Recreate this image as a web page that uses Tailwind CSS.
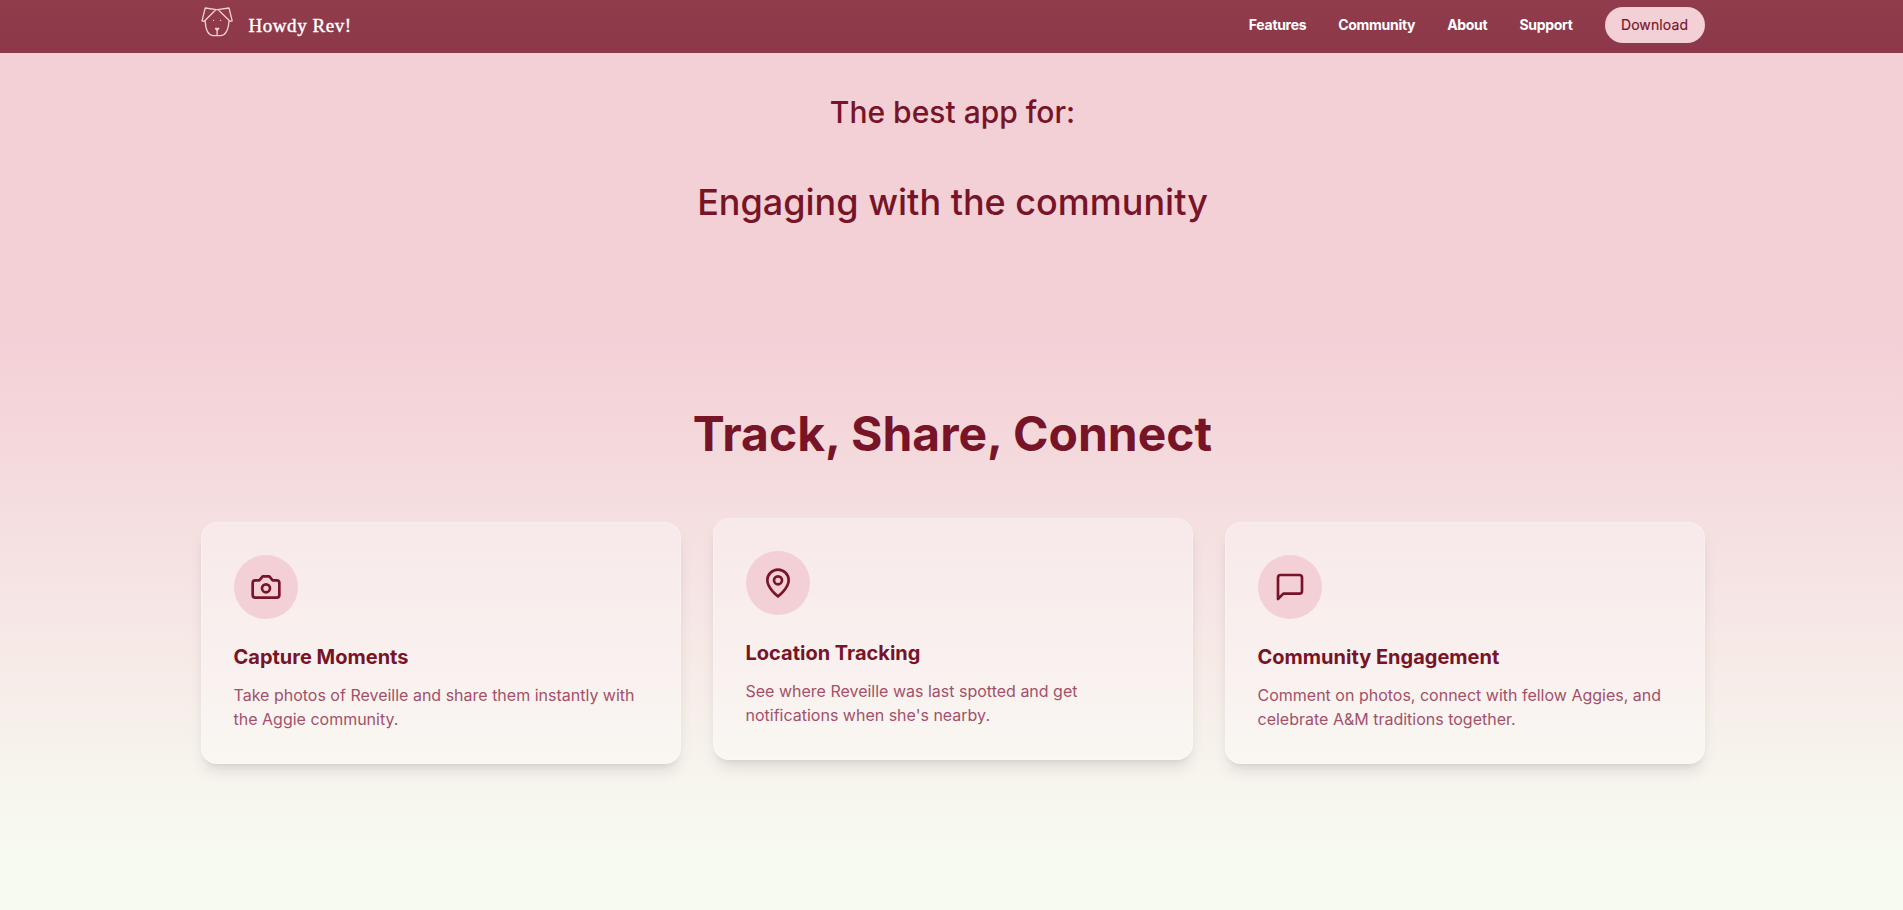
<!DOCTYPE html>
<html lang="en">
<head>
  <meta charset="UTF-8" />
  <meta name="viewport" content="width=device-width, initial-scale=1.0"/>
  <title>Howdy Rev!</title>
  <script src="https://cdn.jsdelivr.net/npm/@tailwindcss/browser@4"></script>
</head>
<body class="bg-[#f7faf1] text-[#771428] font-['Inter',sans-serif] overflow-hidden">
  <div class="w-[1905px] h-[910px] overflow-hidden">
    <header class="h-[53px] bg-linear-to-b from-[#913c4b] to-[#8c384a]">
      <div class="max-w-[1536px] mx-auto px-4 pt-[7px] flex items-center justify-between">
        <a href="#" class="flex items-center gap-4">
          <svg class="w-8 h-8 -mt-2" viewBox="0 0 32 32" fill="none" stroke="#f3cfd6" stroke-width="1.3" stroke-linejoin="round" stroke-linecap="round">
            <path d="M15.500 4.600 4.200 3 1 15.800 3.200 16.300 14.800 4.700" />
            <path d="M16.500 4.600 28 3 31.200 15.800 29 16.300 17.200 4.700" />
            <path d="M4.200 16.300C4.500 23 6.500 30 12 30.600H20C25.500 30 27.500 23 28 16.300" />
            <path fill="#f3cfd6" d="M14.500 23.500H17.800L16.100 25.300Z" />
            <path d="M16.100 25.600V30" />
            <path d="M12.500 15.300V15.400M19.500 15.300V15.400" />
          </svg>
          <span class="pt-0.5 text-[19px] leading-7 tracking-[0.55px] text-white font-['Liberation_Serif',serif] [-webkit-text-stroke:0.4px_white]">Howdy Rev!</span>
        </a>
        <nav class="flex items-center gap-8 text-sm text-white">
          <a href="#" class="font-bold tracking-[-0.3px]">Features</a>
          <a href="#" class="font-bold tracking-[-0.3px]">Community</a>
          <a href="#" class="font-bold tracking-[-0.3px]">About</a>
          <a href="#" class="font-bold tracking-[-0.3px]">Support</a>
          <a href="#" class="h-9 w-[100px] flex items-center justify-center rounded-full bg-[#f3cfd6] text-[#771428] tracking-[0.1px] [-webkit-text-stroke:0.15px_#771428]">Download</a>
        </nav>
      </div>
    </header>

    <section class="h-[277px] bg-[#f3cfd6] pt-[41px] text-center">
      <h2 class="text-3xl font-medium">The best app for:</h2>
      <p class="mt-[52px] text-4xl font-medium">Engaging with the community</p>
    </section>

    <section class="bg-linear-to-b from-[#f3cfd6] to-[#f7faf1] py-20">
      <div class="max-w-[1536px] mx-auto px-4">
        <h2 class="text-5xl leading-none font-bold text-center mb-16">Track, Share, Connect</h2>
        <div class="grid grid-cols-3 gap-8">
          <div class="rounded-2xl border border-white/20 bg-white/32 p-8 shadow-lg">
            <div class="w-16 h-16 rounded-full bg-[#f3cfd6] flex items-center justify-center mb-6">
              <svg class="w-8 h-8" viewBox="0 0 24 24" fill="none" stroke="currentColor" stroke-width="2" stroke-linecap="round" stroke-linejoin="round">
                <path d="M14.5 4h-5L7 7H4a2 2 0 0 0-2 2v9a2 2 0 0 0 2 2h16a2 2 0 0 0 2-2V9a2 2 0 0 0-2-2h-3l-2.500-3z" />
                <circle cx="12" cy="13" r="3" />
              </svg>
            </div>
            <h3 class="text-xl font-bold mb-3">Capture Moments</h3>
            <p class="text-[#a35069]">Take photos of Reveille and share them instantly with the Aggie community.</p>
          </div>
          <div class="-translate-y-1 rounded-2xl border border-white/20 bg-white/32 p-8 shadow-lg">
            <div class="w-16 h-16 rounded-full bg-[#f3cfd6] flex items-center justify-center mb-6">
              <svg class="w-8 h-8" viewBox="0 0 24 24" fill="none" stroke="currentColor" stroke-width="2" stroke-linecap="round" stroke-linejoin="round">
                <path d="M20 10c0 6-8 12-8 12s-8-6-8-12a8 8 0 0 1 16 0Z" />
                <circle cx="12" cy="10" r="3" />
              </svg>
            </div>
            <h3 class="text-xl font-bold mb-3">Location Tracking</h3>
            <p class="text-[#a35069] pr-16">See where Reveille was last spotted and get notifications when she's nearby.</p>
          </div>
          <div class="rounded-2xl border border-white/20 bg-white/32 p-8 shadow-lg">
            <div class="w-16 h-16 rounded-full bg-[#f3cfd6] flex items-center justify-center mb-6">
              <svg class="w-8 h-8" viewBox="0 0 24 24" fill="none" stroke="currentColor" stroke-width="2" stroke-linecap="round" stroke-linejoin="round">
                <path d="M21 15a2 2 0 0 1-2 2H7l-4 4V5a2 2 0 0 1 2-2h14a2 2 0 0 1 2 2z" />
              </svg>
            </div>
            <h3 class="text-xl font-bold mb-3">Community Engagement</h3>
            <p class="text-[#a35069]">Comment on photos, connect with fellow Aggies, and celebrate A&amp;M traditions together.</p>
          </div>
        </div>
      </div>
    </section>
  </div>
</body>
</html>
